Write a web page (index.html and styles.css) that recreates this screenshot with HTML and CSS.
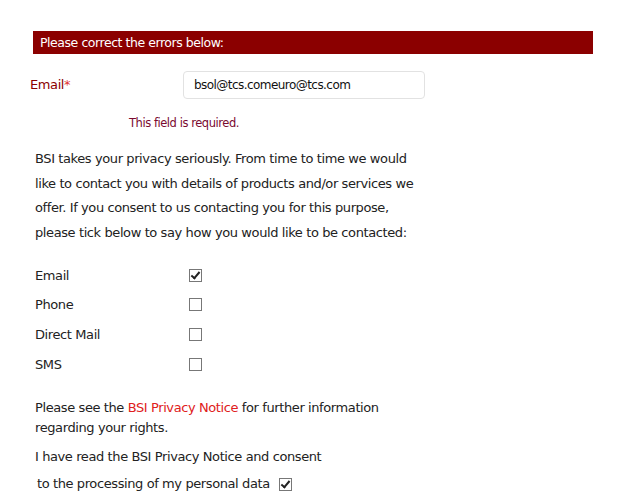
FILE: index.html
```html
<!DOCTYPE html>
<html>
<head>
<meta charset="utf-8">
<link rel="stylesheet" href="styles.css">
</head>
<body>
<div class="form">
  <div class="banner">Please correct the errors below:</div>
  <div class="field">
    <label class="field-label">Email<span class="req">*</span></label>
    <div class="input">bsol@tcs.comeuro@tcs.com</div>
  </div>
  <div class="error">This field is required.</div>
  <p class="intro">BSI takes your privacy seriously. From time to time we would<br>like to contact you with details of products and/or services we<br>offer. If you consent to us contacting you for this purpose,<br>please tick below to say how you would like to be contacted:</p>
  <div class="options">
    <div class="opt"><span class="opt-label">Email</span><span class="cb checked"></span></div>
    <div class="opt"><span class="opt-label">Phone</span><span class="cb"></span></div>
    <div class="opt"><span class="opt-label">Direct Mail</span><span class="cb"></span></div>
    <div class="opt"><span class="opt-label">SMS</span><span class="cb"></span></div>
  </div>
  <p class="notice">Please see the <a class="link">BSI Privacy Notice</a> for further information<br>regarding your rights.</p>
  <p class="consent1">I have read the BSI Privacy Notice and consent</p>
  <p class="consent2">to the processing of my personal data<span class="cb checked consent-cb"></span></p>
</div>
</body>
</html>
```
FILE: styles.css
```css
html, body { margin: 0; padding: 0; background: #fff; }
body { font-family: "DejaVu Sans", Verdana, sans-serif; font-size: 13px; letter-spacing: -0.4px; color: #222; }
.form { padding: 31px 0 0 33px; width: 560px; }
.banner { background: #8b0000; color: #fff; height: 23px; line-height: 23px; padding-left: 7px; font-size: 12.5px; letter-spacing: -0.45px; }
.field { display: flex; align-items: center; margin-top: 17px; margin-left: -3px; }
.field-label { width: 153px; color: #8b0000; font-size: 13px; margin-top: -2px; }
.req { color: #e03030; }
.input { width: 230px; height: 26px; border: 1px solid #e2e2e2; border-radius: 4px; line-height: 26px; padding-left: 10px; font-size: 12px; letter-spacing: -0.55px; color: #111; }
.error { margin: 17px 0 0 96px; color: #7a0a30; font-size: 11.5px; letter-spacing: -0.45px; }
.intro { margin: 17px 0 0 2px; width: 420px; line-height: 24.6px; white-space: nowrap; }
.options { margin-top: 15px; margin-left: 2px; }
.opt { display: flex; align-items: center; height: 29.7px; }
.opt-label { width: 154px; }
.cb { display: inline-block; width: 11px; height: 11px; border: 1px solid #777; position: relative; vertical-align: middle; }
.cb.checked::after { content: ""; position: absolute; left: 3px; top: 0px; width: 3px; height: 7px; border: solid #222; border-width: 0 2.5px 2.5px 0; transform: rotate(40deg); }
.consent-cb { margin-left: 9px; }
.notice { margin: 19px 0 0 2px; line-height: 20px; }
.link { color: #e02020; text-decoration: none; }
.consent1 { margin: 9px 0 0 2px; line-height: 20px; }
.consent2 { margin: 7px 0 0 4px; line-height: 20px; }
```
